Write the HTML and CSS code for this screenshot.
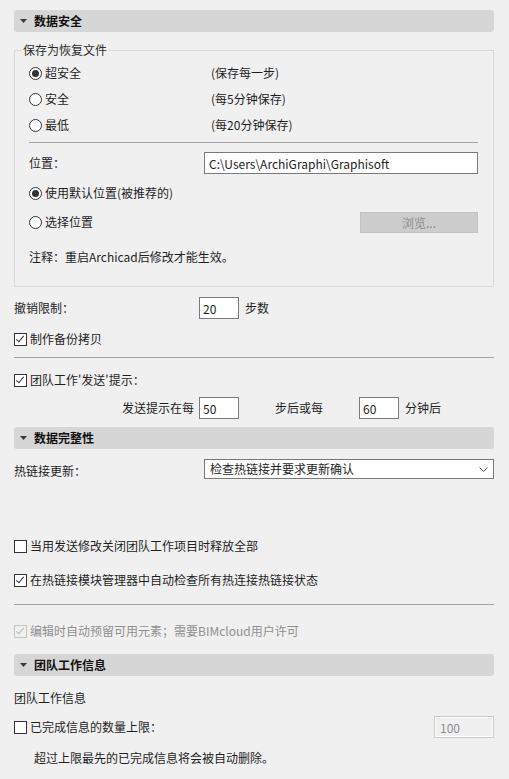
FILE: index.html
```html
<!DOCTYPE html>
<html lang="zh-CN">
<head>
    <meta charset="UTF-8">
    <meta name="viewport" content="width=device-width, initial-scale=1.0">
    <title>数据安全</title>
    <link rel="stylesheet" href="styles.css">
</head>
<body>
    <div class="panel">
        <!-- 数据安全 -->
        <div class="section-head">
            <svg class="tri" width="7" height="4" viewBox="0 0 7 4"><path d="M0 0h7L3.5 4z" fill="#3a3a3a"/></svg>
            数据安全
        </div>

        <fieldset class="group">
            <legend>保存为恢复文件</legend>
            <div class="group-inner">
                <div class="radio-row">
                    <span class="radio-col"><span class="radio on"></span>超安全</span>
                    <span>(保存每一步)</span>
                </div>
                <div class="radio-row">
                    <span class="radio-col"><span class="radio"></span>安全</span>
                    <span>(每5分钟保存)</span>
                </div>
                <div class="radio-row">
                    <span class="radio-col"><span class="radio"></span>最低</span>
                    <span>(每20分钟保存)</span>
                </div>

                <div class="sep inner-sep"></div>

                <div class="path-row">
                    <span class="path-label">位置：</span>
                    <div class="field path-field">C:\Users\ArchiGraphi\Graphisoft</div>
                </div>
                <div class="radio-row default-row">
                    <span class="radio on"></span>使用默认位置(被推荐的)
                </div>
                <div class="radio-row choose-row">
                    <span class="radio-col"><span class="radio"></span>选择位置</span>
                    <button class="browse" disabled>浏览...</button>
                </div>
                <p class="note">注释：重启Archicad后修改才能生效。</p>
            </div>
        </fieldset>

        <div class="num-row undo-row">
            <span class="num-label">撤销限制：</span>
            <div class="field num">20</div>
            <span class="unit">步数</span>
        </div>
        <div class="check-row backup-row"><span class="check on"></span>制作备份拷贝</div>

        <div class="sep sep-a"></div>

        <div class="check-row team-row"><span class="check on"></span>团队工作'发送'提示：</div>
        <div class="num-row send-row">
            <span class="num-label right">发送提示在每</span>
            <div class="field num">50</div>
            <span class="unit gap">步后或每</span>
            <div class="field num">60</div>
            <span class="unit">分钟后</span>
        </div>

        <!-- 数据完整性 -->
        <div class="section-head integrity-head">
            <svg class="tri" width="7" height="4" viewBox="0 0 7 4"><path d="M0 0h7L3.5 4z" fill="#3a3a3a"/></svg>
            数据完整性
        </div>

        <div class="select-row">
            <span class="select-label">热链接更新：</span>
            <div class="select">
                <span>检查热链接并要求更新确认</span>
                <svg width="9" height="5" viewBox="0 0 9 5"><path d="M0.5 0.5l4 4 4-4" fill="none" stroke="#555" stroke-width="1"/></svg>
            </div>
        </div>

        <div class="check-row release-row"><span class="check"></span>当用发送修改关闭团队工作项目时释放全部</div>
        <div class="check-row auto-row"><span class="check on"></span>在热链接模块管理器中自动检查所有热连接热链接状态</div>

        <div class="sep sep-b"></div>

        <div class="check-row disabled-row"><span class="check on dim"></span>编辑时自动预留可用元素；需要BIMcloud用户许可</div>

        <!-- 团队工作信息 -->
        <div class="section-head team-head">
            <svg class="tri" width="7" height="4" viewBox="0 0 7 4"><path d="M0 0h7L3.5 4z" fill="#3a3a3a"/></svg>
            团队工作信息
        </div>

        <p class="plain team-label">团队工作信息</p>
        <div class="limit-row">
            <div class="check-row"><span class="check"></span>已完成信息的数量上限：</div>
            <div class="field num dim-field">100</div>
        </div>
        <p class="plain limit-note">超过上限最先的已完成信息将会被自动删除。</p>
    </div>
</body>
</html>
```

FILE: styles.css
```css
body {
    margin: 0;
    background: #f0f0f0;
    font-family: "Noto Sans CJK SC", "Noto Sans", sans-serif;
    font-size: 12px;
    line-height: 16px;
    color: #1e1e1e;
}

.panel {
    width: 480px;
    padding: 10px 0 0 14px;
}

.section-head {
    height: 22px;
    background: #d6d6d6;
    border-radius: 3px;
    display: flex;
    align-items: center;
    padding-left: 6px;
    font-weight: bold;
    color: #111;
}

.tri {
    margin-right: 7px;
}

/* group box */
.group {
    margin: 10px 0 0 0;
    padding: 0 0 21px 7px;
    border: 1px solid #dadada;
    min-width: 0;
}

.group legend {
    padding: 0 1px;
    color: #2a2a2a;
}

.group-inner {
    margin: 0 15px 0 7px;
    padding-top: 2px;
}

.radio-row {
    height: 26px;
    display: flex;
    align-items: center;
}

.radio-col {
    width: 182px;
    display: flex;
    align-items: center;
}

.radio {
    width: 11px;
    height: 11px;
    border: 1px solid #333;
    border-radius: 50%;
    background: #fff;
    margin-right: 3px;
    position: relative;
    flex: none;
}

.radio.on::after {
    content: "";
    position: absolute;
    left: 2px;
    top: 2px;
    width: 7px;
    height: 7px;
    border-radius: 50%;
    background: #333;
}

.sep {
    height: 1px;
    background: #a3a3a3;
}

.inner-sep {
    margin-top: 4px;
}

.path-row {
    margin-top: 9px;
    height: 22px;
    display: flex;
    align-items: center;
}

.path-label {
    width: 175px;
}

.field {
    box-sizing: border-box;
    height: 22px;
    border: 1px solid #7a7a7a;
    background: #fff;
    padding: 2px 4px 0;
    line-height: 17px;
}

.path-field {
    flex: 1;
}

.default-row {
    margin-top: 7px;
    height: 24px;
}

.choose-row {
    margin-top: 5px;
    height: 24px;
    justify-content: space-between;
}

.browse {
    width: 118px;
    height: 21px;
    border: 1px solid #c2c2c2;
    background: #cccccc;
    color: #8c8c8c;
    font-family: inherit;
    font-size: 12px;
    padding: 0;
}

.note {
    margin: 15px 0 0;
}

/* numeric rows */
.num-row {
    display: flex;
    align-items: center;
    height: 22px;
}

.undo-row {
    margin-top: 10px;
}

.num-label {
    width: 185px;
}

.num-label.right {
    text-align: right;
    box-sizing: border-box;
    padding-right: 5px;
}

.num {
    width: 40px;
    padding-left: 3px;
}

.unit {
    margin-left: 6px;
}

.unit.gap {
    margin: 0 36px;
}

.check-row {
    height: 20px;
    display: flex;
    align-items: center;
}

.check {
    width: 11px;
    height: 11px;
    border: 1px solid #333;
    background: #fff;
    margin-right: 3px;
    position: relative;
    flex: none;
}

.check.on::after {
    content: "";
    position: absolute;
    left: 3px;
    top: 0px;
    width: 3px;
    height: 7px;
    border: solid #333;
    border-width: 0 1px 1px 0;
    transform: rotate(40deg);
}

.check.dim {
    border-color: #c4c4c4;
    background: #f0f0f0;
}

.check.dim::after {
    border-color: #b8b8b8;
}

.backup-row {
    margin-top: 10px;
}

.sep-a {
    margin-top: 8px;
}

.team-row {
    margin-top: 12px;
}

.send-row {
    margin-top: 7px;
}

.integrity-head {
    margin-top: 8px;
}

.select-row {
    margin-top: 10px;
    display: flex;
    align-items: center;
}

.select-label {
    width: 190px;
    padding-top: 4px;
}

.select {
    flex: 1;
    box-sizing: border-box;
    height: 20px;
    border: 1px solid #7a7a7a;
    background: #fff;
    display: flex;
    align-items: center;
    justify-content: space-between;
    padding: 0 5px 0 5px;
}

.release-row {
    margin-top: 57px;
}

.auto-row {
    margin-top: 14px;
}

.sep-b {
    margin-top: 14px;
}

.disabled-row {
    margin-top: 16px;
    color: #8f8f8f;
}

.team-head {
    margin-top: 13px;
}

.plain {
    margin: 0;
}

.team-label {
    margin-top: 14px;
}

.limit-row {
    margin-top: 10px;
    height: 22px;
    display: flex;
    align-items: center;
    justify-content: space-between;
}

.dim-field {
    width: 60px;
    background: #f0f0f0;
    border-color: #cbcbcb;
    box-shadow: inset 0 0 0 1px #fff;
    color: #8f8f8f;
    padding-left: 5px;
}

.limit-note {
    margin-top: 12px;
    padding-left: 20px;
}
```
